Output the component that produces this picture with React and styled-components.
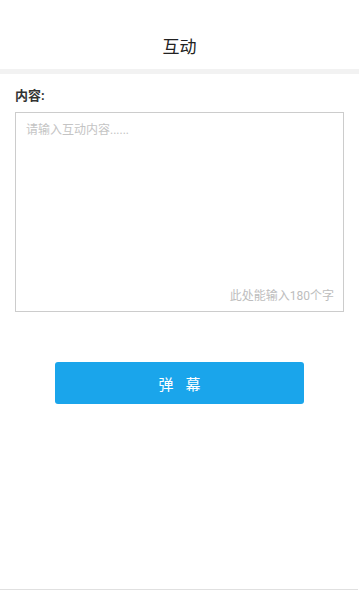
import styled, { createGlobalStyle } from "styled-components";

const GlobalStyle = createGlobalStyle`
  html, body {
    margin: 0;
    padding: 0;
    background: #fff;
  }
  body {
    font-family: Roboto, "Noto Sans CJK SC", sans-serif;
  }
  * { box-sizing: border-box; }
`;

const Page = styled.div`
  height: 100vh;
  display: flex;
  flex-direction: column;
`;

const Header = styled.header`
  box-sizing: content-box;
  padding-top: 22px;
  height: 47px;
  display: flex;
  align-items: center;
  justify-content: center;
  font-size: 17px;
  color: #222;
  border-bottom: 5px solid #f2f2f2;
`;

const Form = styled.form`
  display: flex;
  flex-direction: column;
  padding: 14px 15px 0;
`;

const Label = styled.label`
  font-size: 13px;
  line-height: 16px;
  font-weight: 700;
  color: #333;
`;

const Box = styled.div`
  position: relative;
  margin-top: 8px;
  height: 200px;
  border: 1px solid #cccccc;
`;

const Input = styled.textarea`
  width: 100%;
  height: 100%;
  border: none;
  outline: none;
  resize: none;
  padding: 8px 10px 26px;
  font-family: inherit;
  font-size: 12px;
  line-height: 18px;
  color: #333;
  background: transparent;
  &::placeholder {
    color: #c4c4c4;
  }
`;

const Counter = styled.span`
  position: absolute;
  right: 9px;
  bottom: 7px;
  font-size: 12px;
  line-height: 16px;
  color: #bdbdbd;
`;

const Submit = styled.button`
  align-self: center;
  margin-top: 50px;
  width: 249px;
  height: 42px;
  border: none;
  border-radius: 3px;
  background: #1aa5eb;
  color: #fff;
  font-family: inherit;
  font-size: 15px;
  letter-spacing: 12px;
  text-indent: 12px;
  cursor: pointer;
`;

const Footer = styled.div`
  margin-top: auto;
  margin-bottom: 2px;
  margin-right: 1px;
  height: 1px;
  background: #e0e0e0;
`;

export default function App() {
  return (
    <Page>
      <GlobalStyle />
      <Header>互动</Header>
      <Form onSubmit={(e) => e.preventDefault()}>
        <Label>内容:</Label>
        <Box>
          <Input placeholder="请输入互动内容......" maxLength={180} />
          <Counter>此处能输入180个字</Counter>
        </Box>
        <Submit type="submit">弹幕</Submit>
      </Form>
      <Footer />
    </Page>
  );
}
